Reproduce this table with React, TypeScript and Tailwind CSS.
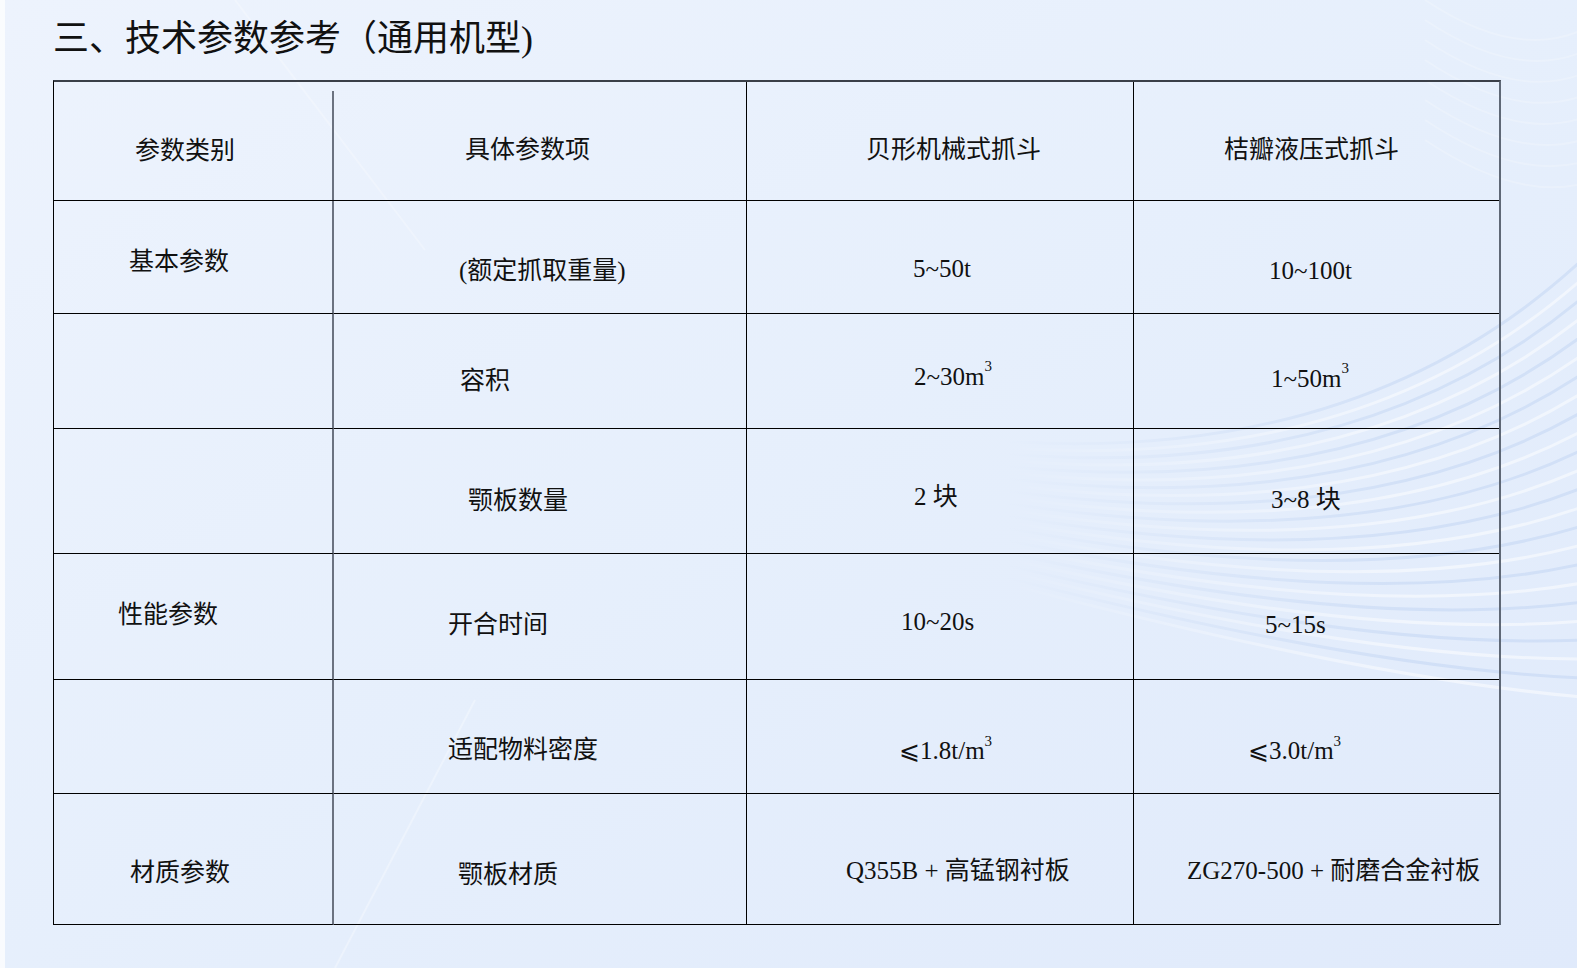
import { FC, ReactNode } from "react";

interface Cell {
  text?: ReactNode;
  cls: string;
}

const Sup: FC = () => <sup className="relative top-[-10px] text-[15px]">3</sup>;

// 每行: 高度固定, 文字位置按原图逐格微调
const rows: Cell[][] = [
  [
    { text: "参数类别", cls: "pl-[81px] pt-[18px]" },
    { text: "具体参数项", cls: "pl-[131px] pt-[16px]" },
    { text: "贝形机械式抓斗", cls: "pl-[119px] pt-[16px]" },
    { text: "桔瓣液压式抓斗", cls: "pl-[90px] pt-[16px]" },
  ],
  [
    { text: "基本参数", cls: "pl-[75px] pt-[8px]" },
    { text: "(额定抓取重量)", cls: "pl-[125px] pt-[26px]" },
    { text: "5~50t", cls: "pl-[166px] pt-[22px]" },
    { text: "10~100t", cls: "pl-[135px] pt-[26px]" },
  ],
  [
    { cls: "" },
    { text: "容积", cls: "pl-[126px] pt-[18px]" },
    {
      text: (
        <>
          2~30m<Sup />
        </>
      ),
      cls: "pl-[167px] pt-[10px]",
    },
    {
      text: (
        <>
          1~50m<Sup />
        </>
      ),
      cls: "pl-[137px] pt-[14px]",
    },
  ],
  [
    { cls: "" },
    { text: "颚板数量", cls: "pl-[134px] pt-[18px]" },
    { text: "2 块", cls: "pl-[167px] pt-[10px]" },
    { text: "3~8 块", cls: "pl-[137px] pt-[16px]" },
  ],
  [
    { text: "性能参数", cls: "pl-[64px] pb-[4px]" },
    { text: "开合时间", cls: "pl-[114px] pt-[16px]" },
    { text: "10~20s", cls: "pl-[154px] pt-[10px]" },
    { text: "5~15s", cls: "pl-[131px] pt-[16px]" },
  ],
  [
    { cls: "" },
    { text: "适配物料密度", cls: "pl-[114px] pt-[26px]" },
    {
      text: (
        <>
          ⩽1.8t/m<Sup />
        </>
      ),
      cls: "pl-[152px] pt-[28px]",
    },
    {
      text: (
        <>
          ⩽3.0t/m<Sup />
        </>
      ),
      cls: "pl-[114px] pt-[28px]",
    },
  ],
  [
    { text: "材质参数", cls: "pl-[76px] pt-[26px]" },
    { text: "颚板材质", cls: "pl-[124px] pt-[30px]" },
    { text: "Q355B + 高锰钢衬板", cls: "pl-[99px] pt-[22px]" },
    { text: "ZG270-500 + 耐磨合金衬板", cls: "pl-[53px] pt-[22px]" },
  ],
];

const colBorder = [
  "border-r-2 border-r-[#6b7280]",
  "border-r border-r-black",
  "border-r border-r-black",
  "",
];

const Waves: FC = () => (
  <svg className="absolute inset-0 pointer-events-none" width="1577" height="968" viewBox="0 0 1577 968">
    <defs>
      <linearGradient id="wBlue" gradientUnits="userSpaceOnUse" x1="1000" y1="0" x2="1400" y2="0">
        <stop offset="0" stopColor="#a9c3ec" stopOpacity="0" />
        <stop offset="1" stopColor="#a9c3ec" stopOpacity="0.3" />
      </linearGradient>
      <linearGradient id="wWhite" gradientUnits="userSpaceOnUse" x1="1000" y1="0" x2="1400" y2="0">
        <stop offset="0" stopColor="#ffffff" stopOpacity="0" />
        <stop offset="1" stopColor="#ffffff" stopOpacity="0.5" />
      </linearGradient>
    </defs>
    <path d="M 330 968 L 470 700" stroke="rgba(255,255,255,0.3)" strokeWidth="2" fill="none" />
    <path d="M 230 0 L 420 250" stroke="rgba(255,255,255,0.25)" strokeWidth="2" fill="none" />
    {Array.from({ length: 24 }).map((_, i) => (
      <path
        key={i}
        d={`M 980 ${440 + i * 6} Q 1350 ${470 + i * 9} 1577 ${260 + i * 19}`}
        stroke={i % 2 ? "url(#wWhite)" : "url(#wBlue)"}
        strokeWidth="3"
        fill="none"
      />
    ))}
    {Array.from({ length: 8 }).map((_, i) => (
      <path
        key={"t" + i}
        d={`M 1420 ${0 + i * 20} Q 1510 ${60 + i * 20} 1577 ${30 + i * 22}`}
        stroke="rgba(255,255,255,0.2)"
        strokeWidth="2"
        fill="none"
      />
    ))}
  </svg>
);

export default function App() {
  return (
    <div className="relative w-[1577px] h-[968px] overflow-hidden border-l-[5px] border-white/80 bg-linear-to-br from-[#edf3fd] via-[#e6effc] to-[#e0eafb] font-['Liberation_Serif','Noto_Sans_CJK_SC',serif] text-[#111]">
      <Waves />
      <div className="relative flex flex-col">
        <h1 className="pl-[48px] pt-[21px] text-[36px] leading-[36px] font-normal">三、技术参数参考（通用机型)</h1>
        <div className="ml-[48px] mt-[23px] w-[1448px] border-t-2 border-t-[#3a3f48] border-l border-l-black border-r-2 border-r-[#5f6876]">
          <div className="grid grid-cols-[280px_413px_387px_365px] grid-rows-[119px_113px_115px_125px_126px_114px_131px]">
            {rows.map((row, r) =>
              row.map((cell, c) => (
                <div
                  key={r + "-" + c}
                  className={`relative flex items-center border-b border-b-black text-[25px] leading-[25px] whitespace-nowrap ${
                    r === 0 && c === 0 ? "" : colBorder[c]
                  } ${cell.cls}`}
                >
                  {cell.text}
                  {r === 0 && c === 0 && (
                    <div className="absolute right-0 top-[9px] bottom-0 w-[2px] bg-[#6b7280]" />
                  )}
                </div>
              ))
            )}
          </div>
        </div>
      </div>
    </div>
  );
}
